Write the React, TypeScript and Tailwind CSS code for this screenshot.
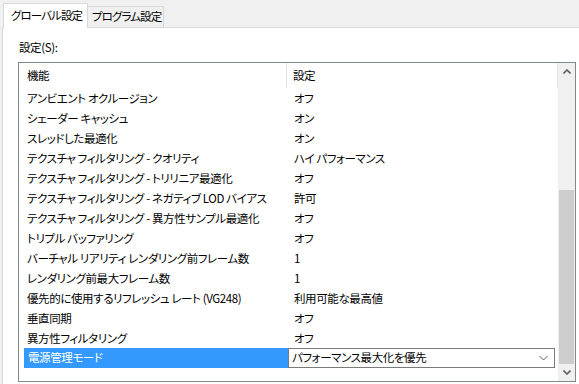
import React from "react";

const rows: [string, string][] = [
  ["アンビエント オクルージョン", "オフ"],
  ["シェーダー キャッシュ", "オン"],
  ["スレッドした最適化", "オン"],
  ["テクスチャ フィルタリング - クオリティ", "ハイ パフォーマンス"],
  ["テクスチャ フィルタリング - トリリニア最適化", "オフ"],
  ["テクスチャ フィルタリング - ネガティブ LOD バイアス", "許可"],
  ["テクスチャ フィルタリング - 異方性サンプル最適化", "オフ"],
  ["トリプル バッファリング", "オフ"],
  ["バーチャル リアリティ レンダリング前フレーム数", "1"],
  ["レンダリング前最大フレーム数", "1"],
  ["優先的に使用するリフレッシュ レート (VG248)", "利用可能な最高値"],
  ["垂直同期", "オフ"],
  ["異方性フィルタリング", "オフ"],
];

const font = "font-['Noto_Sans_CJK_JP',sans-serif] [font-feature-settings:'palt'] text-[11.5px] tracking-[-0.4px] text-black";

export default function App() {
  return (
    <div className={`w-[579px] h-[384px] bg-[#f0f0f0] overflow-hidden flex flex-col ${font}`}>
      {/* tabs */}
      <div className="h-[27px] flex items-end pl-[3px] relative z-10">
        <div className="w-[85px] h-[25px] bg-white border border-[#d9d9d9] border-b-0 flex items-center pl-[7px] leading-none whitespace-nowrap tracking-[-0.9px] mb-[-1px]">
          グローバル設定
        </div>
        <div className="h-[21px] w-[76px] bg-[#f0f0f0] border border-[#d9d9d9] border-l-0 border-b-0 flex items-center pl-[4px] leading-none whitespace-nowrap tracking-[-0.9px]">
          プログラム設定
        </div>
      </div>
      {/* panel */}
      <div className="flex-1 ml-[2px] bg-white border-l border-t border-[#d9d9d9] flex flex-col pl-[15px] pr-[3px]">
        <div className="h-[34px] flex items-center pt-[6px] pl-[1px] leading-none">設定(S):</div>
        <div className="w-[558px] h-[320px] border border-[#828790] flex">
          <div className="flex-1 flex flex-col">
            {/* header */}
            <div className="h-[25px] flex items-center">
              <div className="w-[268px] h-full flex items-center pl-[8px] border-r border-[#e5e5e5]">機能</div>
              <div className="flex-1 h-full flex items-center pl-[6px] border-r border-[#e5e5e5]">設定</div>
            </div>
            {rows.map(([a, b]) => (
              <div key={a} className="h-[20px] flex items-center pt-[1px]">
                <div className="w-[269px] pl-[8px] whitespace-nowrap leading-none">{a}</div>
                <div className="flex-1 pl-[6px] whitespace-nowrap leading-none">{b}</div>
              </div>
            ))}
            <div className="h-[20px] flex items-center">
              <div className="w-[264px] ml-[5px] h-full bg-[#3399ff] text-white flex items-center pl-[4px] leading-none">
                電源管理モード
              </div>
              <div className="w-[267px] h-[20px] border border-[#7a7a7a] bg-white flex items-center pl-[3px] pr-[6px] justify-between leading-none">
                <span>パフォーマンス最大化を優先</span>
                <svg width="9" height="6" viewBox="0 0 9 6">
                  <path d="M0.5 1 L4.5 5 L8.5 1" fill="none" stroke="#606060" strokeWidth="1" />
                </svg>
              </div>
            </div>
          </div>
          {/* scrollbar */}
          <div className="w-[17px] bg-[#f0f0f0] flex flex-col">
            <div className="h-[17px] flex items-center justify-center">
              <svg width="8" height="5" viewBox="0 0 8 5">
                <path d="M0.5 4.5 L4 1 L7.5 4.5" fill="none" stroke="#606060" strokeWidth="1.6" />
              </svg>
            </div>
            <div className="h-[110px]" />
            <div className="flex-1 bg-[#cdcdcd] mx-[1px]" />
            <div className="h-[17px] flex items-center justify-center">
              <svg width="8" height="5" viewBox="0 0 8 5">
                <path d="M0.5 0.5 L4 4 L7.5 0.5" fill="none" stroke="#606060" strokeWidth="1.6" />
              </svg>
            </div>
          </div>
        </div>
      </div>
    </div>
  );
}
